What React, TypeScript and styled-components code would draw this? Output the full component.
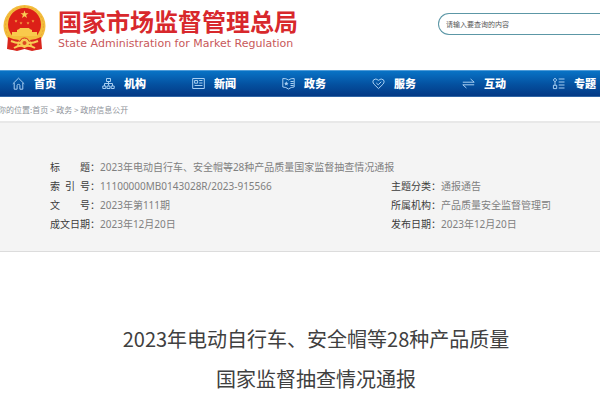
import React from "react";
import styled, { createGlobalStyle } from "styled-components";

const sans = '"Noto Sans", "Noto Sans CJK SC", sans-serif';
const cjk = '"Noto Sans CJK SC", "Noto Sans", sans-serif';

const GlobalStyle = createGlobalStyle`
  *, *::before, *::after { box-sizing: border-box; }
  body { margin: 0; background: #fff; overflow-x: hidden; font-family: ${sans}; }
`;

const Page = styled.div`
  overflow: hidden;
`;

const Header = styled.header`
  display: flex;
  align-items: flex-start;
  justify-content: space-between;
  height: 70px;
`;

const Brand = styled.a`
  display: flex;
  gap: 12px;
  padding: 4px 0 0 3px;
  color: #d8282c;
  text-decoration: none;
`;

const Emblem = styled.svg`
  width: 43px;
  height: 48px;
`;

const BrandText = styled.span`
  display: flex;
  flex-direction: column;
  gap: 2px;
  padding-top: 3px;
  white-space: nowrap;
`;

const BrandName = styled.span`
  font: 700 24px/28px ${cjk};
`;

const BrandEnglish = styled.span`
  font: 400 11px/14px "DejaVu Sans", sans-serif;
  color: #c8585a;
`;

const Search = styled.form`
  width: 27%;
  margin-top: 13px;
`;

const SearchInput = styled.input`
  display: block;
  width: 100%;
  height: 22px;
  padding: 0 7px;
  border: 1px solid #5c97a6;
  border-right: 0;
  border-radius: 11px 0 0 11px;
  background: #fff;
  color: #444;
  font: 400 7px/20px ${cjk};
  outline: none;
  &::placeholder { color: #555; opacity: 1; }
`;

const Nav = styled.nav`
  border-top: 1px solid #4d9bd8;
  border-bottom: 1px solid #2f66a6;
  background: linear-gradient(#0873c6, #04509f 55%, #033985);
`;

const NavList = styled.ul`
  display: flex;
  margin: 0;
  padding: 0;
  list-style: none;
`;

const NavItem = styled.li`
  flex: 0 0 15%;
`;

const NavLink = styled.a`
  display: flex;
  align-items: center;
  gap: 9px;
  padding-left: 12px;
  color: #fff;
  font: 900 11px/25px ${cjk};
  text-decoration: none;
  white-space: nowrap;
`;

const NavIcon = styled.svg`
  flex: none;
  width: 13px;
  height: 13px;
  fill: none;
  stroke: #a8cff2;
  stroke-width: 1;
  stroke-linejoin: round;
`;

const Crumbs = styled.nav`
  margin-left: -2px;
  padding: 6px 0 5px;
  color: #8d9299;
  font: 400 8px/13px ${cjk};
  white-space: nowrap;
`;

const Crumb = styled.a`
  color: inherit;
  text-decoration: none;
`;

const Meta = styled.dl`
  display: grid;
  grid-template-columns: 62fr 38fr;
  margin: 0;
  padding: 35px 0 17px 50px;
  border-top: 2px solid #e8e8e8;
  border-bottom: 1px solid #dcdcdc;
  background: #f4f4f4;
  font-size: 10px;
  line-height: 19px;
`;

const Field = styled.div<{ $wide?: boolean; $second?: boolean }>`
  display: flex;
  grid-column: ${(p) => (p.$wide ? "1 / -1" : p.$second ? "2" : "1")};
  white-space: nowrap;
`;

const Label = styled.dt`
  display: flex;
  width: 50px;
  color: #3c3c3c;
`;

const LabelText = styled.span`
  display: flex;
  justify-content: space-between;
  width: 40px;
`;

const Value = styled.dd`
  margin: 0;
  color: #808080;
`;

const Title = styled.h1`
  margin: 0;
  padding: 67px 0 6px 32px;
  color: #404040;
  font: 400 20px/40px ${cjk};
  text-align: center;
`;

const icons: Record<string, React.ReactNode> = {
  home: (
    <path d="M.8 6.8 6.5 1.2l5.7 5.6M2.2 6v6.2h2.9V8.4q0-1 1.4-1t1.4 1v3.8h2.9V6" />
  ),
  org: (
    <path d="M4.5 1.5h4v3h-4zM6.5 4.500v4M2.500 9V6.500h8V9M.8 9h3v2.500h-3zM5 9h3v2.500H5zM9.200 9h3v2.500h-3z" />
  ),
  news: (
    <path d="M.7 1.5h11.6v10H.7zM2.6 3.5h3v2.7h-3zM7.2 3.5h3.3M7.2 6h3.3M2.6 8.5h7.9" />
  ),
  policy: (
    <>
      <path d="M.8 1.5Q4 1.2 6.5 3 9 1.2 12.2 1.5V10Q9 10 6.5 12 4 10 .8 10zM8.5 4.5h3.2M8.5 6.5h3.2M8.5 8.5h3.2" />
      <path d="m4.3 4.3 .7 1.4 1.5.2-1.1 1 .3 1.5-1.4-.7-1.3.7.2-1.5-1-1 1.4-.2z" fill="#a8cff2" stroke="none" />
    </>
  ),
  heart: (
    <path d="M6.5 11.6 1.8 7Q0 4.9 1.5 2.9 3.8.8 6.5 3.3 9.2.8 11.5 2.9 13 4.9 11.2 7zM4.3 6l1.9 1.8L9.3 4.7" />
  ),
  exchange: <path d="M.8 5.2h11.4L8.6 2M12.2 7.8H.8L4.4 11" />,
  topics: (
    <path d="M3 1.1 4.7 3 3 4.9 1.3 3zM1.4 8.3h3.3v3.3H1.4zM3 5v3M6.7 2h5.8M6.7 5h5.8M6.7 8h5.8M6.7 11h5.8" />
  ),
};

const navItems = [
  { icon: "home", text: "首页" },
  { icon: "org", text: "机构" },
  { icon: "news", text: "新闻" },
  { icon: "policy", text: "政务" },
  { icon: "heart", text: "服务" },
  { icon: "exchange", text: "互动" },
  { icon: "topics", text: "专题" },
];

const fields = [
  { label: "标题", value: "2023年电动自行车、安全帽等28种产品质量国家监督抽查情况通报", wide: true },
  { label: "索引号", value: "11100000MB0143028R/2023-915566" },
  { label: "主题分类", value: "通报通告", second: true },
  { label: "文号", value: "2023年第111期" },
  { label: "所属机构", value: "产品质量安全监督管理司", second: true },
  { label: "成文日期", value: "2023年12月20日" },
  { label: "发布日期", value: "2023年12月20日", second: true },
];

function NationalEmblem() {
  const star = "m0-4 1 2.8h3L1.6.6l.9 3L0 1.8-2.5 3.6l.9-3L-4-1.2h3z";
  return (
    <Emblem viewBox="0 0 43 48" aria-hidden="true">
      <path d="M6 33 5 45l9 2 7.500-2 7.500 2 9-2-1-12z" fill="#d9251c" />
      <circle cx="21.500" cy="22" r="21" fill="#f3bd3c" />
      <circle cx="21.500" cy="22" r="19" fill="none" stroke="#e9a634" strokeWidth="1" strokeDasharray="2 2" />
      <circle cx="21.500" cy="20.500" r="16.500" fill="#dc2018" />
      <path d={star} transform="translate(21.5 10.500)" fill="#f9cf55" />
      <g fill="#f4a944">
        <path d={star} transform="translate(13 17) scale(.4)" />
        <path d={star} transform="translate(18 19) scale(.4)" />
        <path d={star} transform="translate(25 19) scale(.4)" />
        <path d={star} transform="translate(30 17) scale(.4)" />
      </g>
      <path d="M14 26q3-1 3-2h9q0 1 3 2v2h5v4H9v-4h5z" fill="#f9c94c" />
      <path d="M6 32h31l-2 5-9 1H17l-9-1z" fill="#f3bd3c" />
      <path d="M5 33q6 3 11 3l-4 10-8-1zM38 33q-6 3-11 3l4 10 8-1z" fill="#d9251c" />
      <circle cx="21.500" cy="39" r="5" fill="#f7cc55" stroke="#d9251c" strokeWidth="1" />
      <path d="M8 37q9 4 13.500 0 4.500 4 13.500 0M11 44q7-4 10.500-1 3.500-3 10.500 1" fill="none" stroke="#f8cd57" strokeWidth="2" />
      <circle cx="21.500" cy="39" r="2" fill="#dc4a22" />
    </Emblem>
  );
}

export default function App() {
  return (
    <Page lang="zh-CN">
      <GlobalStyle />
      <Header>
        <Brand href="#">
          <NationalEmblem />
          <BrandText>
            <BrandName>国家市场监督管理总局</BrandName>
            <BrandEnglish>State Administration for Market Regulation</BrandEnglish>
          </BrandText>
        </Brand>
        <Search role="search">
          <SearchInput type="text" aria-label="请输入要查询的内容" placeholder="请输入要查询的内容" />
        </Search>
      </Header>
      <Nav>
        <NavList>
          {navItems.map(({ icon, text }) => (
            <NavItem key={icon}>
              <NavLink href="#">
                <NavIcon viewBox="0 0 13 13" aria-hidden="true">{icons[icon]}</NavIcon>
                {text}
              </NavLink>
            </NavItem>
          ))}
        </NavList>
      </Nav>
      <Crumbs>
        你的位置:<Crumb href="#">首页</Crumb> &gt; <Crumb href="#">政务</Crumb> &gt;{" "}
        <Crumb href="#">政府信息公开</Crumb>
      </Crumbs>
      <Meta>
        {fields.map(({ label, value, wide, second }) => (
          <Field key={label} $wide={wide} $second={second}>
            <Label>
              <LabelText>
                {[...label].map((char) => (
                  <span key={char}>{char}</span>
                ))}
              </LabelText>
              ：
            </Label>
            <Value>{value}</Value>
          </Field>
        ))}
      </Meta>
      <Title>
        2023年电动自行车、安全帽等28种产品质量
        <br />
        国家监督抽查情况通报
      </Title>
    </Page>
  );
}
